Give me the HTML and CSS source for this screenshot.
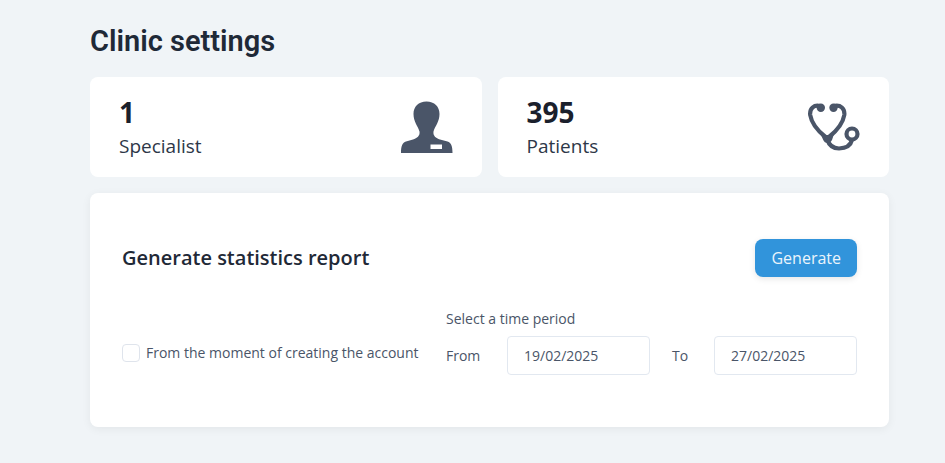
FILE: index.html
```html
<!DOCTYPE html>
<html lang="en">
<head>
    <meta charset="UTF-8">
    <meta name="viewport" content="width=device-width, initial-scale=1.0">
    <title>Clinic settings</title>
    <link rel="stylesheet" href="styles.css">
</head>
<body>
    <main class="page">
        <h1>Clinic settings</h1>

        <div class="cards">
            <div class="card">
                <div>
                    <div class="count">1</div>
                    <div class="name">Specialist</div>
                </div>
                <svg class="icon" viewBox="11 11 52 52" aria-hidden="true">
                    <path fill="currentColor" fill-rule="evenodd" d="M36.500 11.500C28.500 11.500 23.500 16.500 23.500 24C23.500 32 28 36 29.500 41.500C30.200 46 27 48 23 49.500L16 51.500C12.500 52.800 11 55.500 11 63H62.500C62.500 55.500 61 52.800 57.500 51.500L50 49.500C46 48 42.800 46 43.500 41.500C45 36 49.500 32 49.500 24C49.500 16.500 44.500 11.500 36.500 11.500ZM40.500 54.500H52V59H40.500Z"/>
                </svg>
            </div>
            <div class="card">
                <div>
                    <div class="count">395</div>
                    <div class="name">Patients</div>
                </div>
                <svg class="icon" viewBox="13 11 52 52" aria-hidden="true">
                    <g fill="none" stroke="currentColor" stroke-width="4.200">
                        <path d="M25 16C19 14.500 14.500 18.500 15.200 25C16.500 33 23 41 30.500 47H34C41.500 41 48 33 49.300 25C50 18.500 45.500 14.500 39 16"/>
                        <path d="M32 49C34 55 38 58.500 44 58.500C50 58.300 55.500 56 57 50"/>
                        <circle cx="57" cy="44" r="5.500"/>
                    </g>
                    <g fill="currentColor">
                        <circle cx="25.800" cy="17.700" r="4.200"/>
                        <circle cx="38.500" cy="17.700" r="4.200"/>
                        <path d="M25 42.500L32.200 46L39.500 42.500L37 50Q35.500 53 32.500 53T28 49.500Z"/>
                    </g>
                </svg>
            </div>
        </div>

        <section class="panel">
            <div class="panel-header">
                <h2>Generate statistics report</h2>
                <button type="button" class="generate">Generate</button>
            </div>
            <form class="report">
                <label class="whole-period">
                    <input type="checkbox">
                    <span>From the moment of creating the account</span>
                </label>
                <fieldset class="period">
                    <legend>Select a time period</legend>
                    <div class="dates">
                        <label for="from">From</label>
                        <input type="text" id="from" value="19/02/2025">
                        <label for="to">To</label>
                        <input type="text" id="to" value="27/02/2025">
                    </div>
                </fieldset>
            </form>
        </section>
    </main>
</body>
</html>
```
FILE: styles.css
```css
* {
    box-sizing: border-box;
}
body {
    margin: 0;
    background-color: #f0f4f7;
    font-family: "Open Sans", sans-serif;
    font-size: 14px;
    line-height: 20px;
    color: #4a5568;
}
.page {
    padding: 23px 56px 36px 90px;
}
h1 {
    margin: 0 0 18px;
    font-family: Roboto, sans-serif;
    font-size: 29px;
    font-weight: 600;
    line-height: 36px;
    color: #1f2937;
}
.cards {
    display: grid;
    grid-template-columns: 1fr 1fr;
    gap: 16px;
    margin-bottom: 16px;
}
.card {
    display: flex;
    justify-content: space-between;
    align-items: center;
    padding: 16px 29px;
    background-color: #fff;
    border-radius: 8px;
}
.count {
    font-size: 28px;
    font-weight: 700;
    line-height: 38px;
    color: #1a202c;
}
.name {
    font-size: 19px;
    line-height: 30px;
    color: #2d3748;
}
.icon {
    width: 52px;
    height: 52px;
    color: #4a5568;
}
.panel {
    padding: 46px 32px 52px;
    background-color: #fff;
    border-radius: 8px;
    box-shadow: 0 2px 10px rgba(0, 0, 0, 0.06);
}
.panel-header {
    display: flex;
    justify-content: space-between;
    align-items: center;
    margin-bottom: 32px;
}
h2 {
    margin: 0;
    font-size: 20px;
    font-weight: 600;
    line-height: 28px;
    color: #1f2937;
}
.generate {
    padding: 8px 16px;
    border: none;
    border-radius: 8px;
    background-color: #3194db;
    box-shadow: 0 2px 6px rgba(0, 0, 0, 0.1);
    color: #ebf4fb;
    font-family: inherit;
    font-size: 16px;
    line-height: 22px;
    cursor: pointer;
}
.report {
    display: flex;
    justify-content: space-between;
    align-items: flex-end;
}
.whole-period {
    display: flex;
    align-items: center;
    gap: 6px;
    margin-bottom: 12px;
}
.whole-period input {
    appearance: none;
    width: 18px;
    height: 18px;
    margin: 0;
    border: 1px solid #dfe4ec;
    border-radius: 4px;
}
.whole-period input:checked {
    background-color: #3194db;
}
.period {
    flex: 0 1 411px;
    min-width: 0;
    margin: 0;
    padding: 0;
    border: none;
}
legend {
    margin-bottom: 7px;
    padding: 0;
}
.dates {
    display: grid;
    grid-template-columns: 61px 1fr 64px 1fr;
    align-items: center;
}
.dates label[for="to"] {
    padding-left: 22px;
}
.dates input {
    width: 100%;
    height: 39px;
    padding: 0 16px;
    border: 1px solid #e2e8f0;
    border-radius: 4px;
    background-color: #fff;
    color: #4a5568;
    font-family: inherit;
    font-size: 14px;
}
```
